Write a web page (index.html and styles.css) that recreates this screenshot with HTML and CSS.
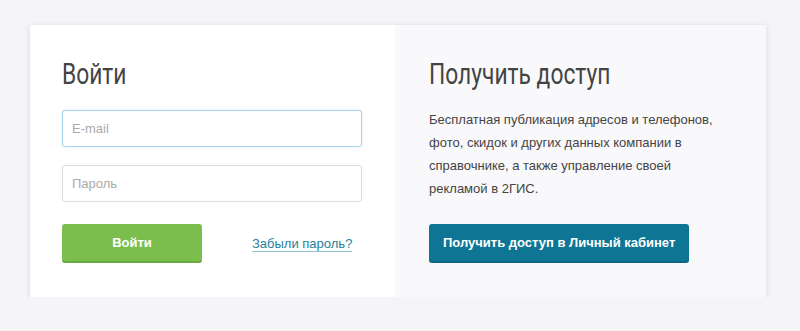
FILE: index.html
```html
<!DOCTYPE html>
<html lang="ru">
<head>
    <meta charset="UTF-8">
    <meta name="viewport" content="width=device-width, initial-scale=1.0">
    <title>Вход</title>
    <link rel="stylesheet" href="styles.css">
</head>
<body>
    <div class="card">
        <div class="login">
            <h2>Войти</h2>
            <input class="field field-focus" type="text" placeholder="E-mail">
            <input class="field" type="password" placeholder="Пароль">
            <div class="actions">
                <button class="btn btn-green">Войти</button>
                <a class="forgot" href="#">Забыли пароль?</a>
            </div>
        </div>
        <div class="access">
            <h2>Получить доступ</h2>
            <p>Бесплатная публикация адресов и телефонов, фото, скидок и других данных компании в справочнике, а также управление своей рекламой в 2ГИС.</p>
            <button class="btn btn-blue">Получить доступ в Личный кабинет</button>
        </div>
    </div>
</body>
</html>
```

FILE: styles.css
```css
body {
    margin: 0;
    padding: 25px 0 0 30px;
    background-color: #f5f5f7;
    font-family: "Liberation Sans", Arial, sans-serif;
    font-size: 13px;
    color: #444;
}
.card {
    display: flex;
    width: 736px;
    height: 272px;
    background-color: #fff;
    box-shadow: 0 1px 6px rgba(0, 0, 0, 0.12);
}
.login {
    width: 365px;
    box-sizing: border-box;
    padding: 30px 33px 0 32px;
}
.access {
    flex: 1;
    box-sizing: border-box;
    padding: 30px 40px 0 34px;
    background-color: #f9f9fb;
}
/* condensed heading face: no narrow font installed, so squeeze Roboto */
h2 {
    margin: 0 0 17px;
    font-family: Roboto, "Liberation Sans", sans-serif;
    font-weight: normal;
    font-size: 30px;
    line-height: 38px;
    color: #444;
    transform: scaleX(0.76);
    transform-origin: left center;
    white-space: nowrap;
}
.access h2 {
    margin-bottom: 15px;
}
.field {
    display: block;
    width: 100%;
    height: 37px;
    box-sizing: border-box;
    margin-bottom: 18px;
    padding: 0 9px;
    border: 1px solid #dcdcdc;
    border-radius: 3px;
    font-family: inherit;
    font-size: 13px;
    color: #444;
    outline: none;
}
.field::placeholder {
    color: #aaa;
}
.field-focus {
    border-color: #a9d6ea;
    box-shadow: 0 0 2px rgba(120, 190, 220, 0.4);
}
.actions {
    display: flex;
    align-items: center;
    margin-top: 22px;
}
.btn {
    height: 39px;
    border: none;
    border-radius: 3px;
    font-family: inherit;
    font-size: 13px;
    font-weight: bold;
    color: #fff;
    cursor: pointer;
}
.btn-green {
    width: 140px;
    background-color: #7bbe4d;
    border-bottom: 2px solid #6aa840;
}
.forgot {
    margin-left: 50px;
    color: #1f7f9e;
    text-decoration: none;
    border-bottom: 1px solid #8fc3d4;
    line-height: 15px;
}
.access p {
    margin: 0 0 24px;
    line-height: 23px;
    color: #444;
}
.btn-blue {
    padding: 0 14px;
    background-color: #0e7595;
    border-bottom: 2px solid #0b6684;
}
```
